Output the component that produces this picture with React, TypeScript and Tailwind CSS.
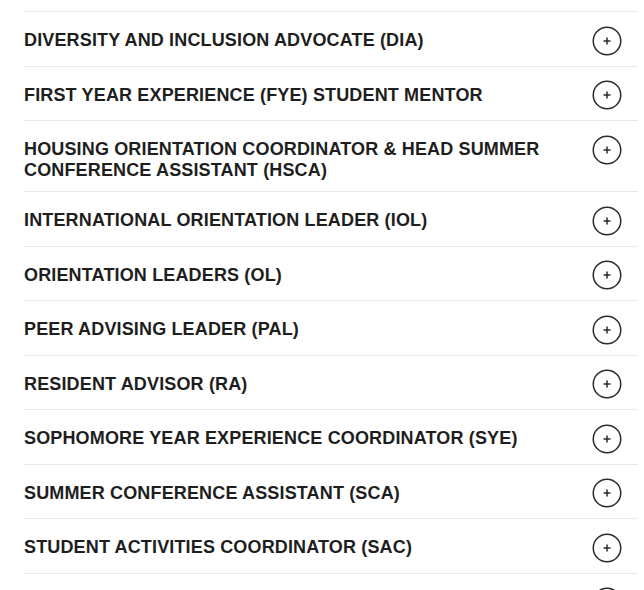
import { Fragment } from 'react';

const roles = [
  'DIVERSITY AND INCLUSION ADVOCATE (DIA)',
  'FIRST YEAR EXPERIENCE (FYE) STUDENT MENTOR',
  'HOUSING ORIENTATION COORDINATOR & HEAD SUMMER CONFERENCE ASSISTANT (HSCA)',
  'INTERNATIONAL ORIENTATION LEADER (IOL)',
  'ORIENTATION LEADERS (OL)',
  'PEER ADVISING LEADER (PAL)',
  'RESIDENT ADVISOR (RA)',
  'SOPHOMORE YEAR EXPERIENCE COORDINATOR (SYE)',
  'SUMMER CONFERENCE ASSISTANT (SCA)',
  'STUDENT ACTIVITIES COORDINATOR (SAC)',
  'STUDENT LEADERSHIP AMBASSADOR (SLA)',
];

function PlusCircle() {
  return (
    <svg width="30" height="30" viewBox="0 0 30 30" fill="none" className="shrink-0">
      <circle cx="15" cy="15" r="13.75" stroke="#2b2b2b" strokeWidth="1.5" />
      <path d="M15 11.5v7M11.5 15h7" stroke="#2b2b2b" strokeWidth="1.5" />
    </svg>
  );
}

export default function App() {
  return (
    <div className="min-h-screen bg-white pt-[11px] pl-6 pr-[6px] font-['Liberation_Sans',Arial,sans-serif]">
      <ul>
        {roles.map((role) => {
          // the two-line row sits a little tighter at the bottom
          const tall = role.length > 60;
          return (
            <Fragment key={role}>
              <li
                className={`flex items-start justify-between border-t border-[#e8e8e8] pt-[18px] ${
                  tall ? 'pb-[10px]' : 'pb-[14.5px]'
                }`}
              >
                <span className="max-w-[540px] text-[18px] font-bold leading-[21px] tracking-[0.15px] text-[#1e1e1e]">
                  {role}
                </span>
                <span className="mr-[16px] flex h-[21px] items-center">
                  <PlusCircle />
                </span>
              </li>
            </Fragment>
          );
        })}
      </ul>
    </div>
  );
}
